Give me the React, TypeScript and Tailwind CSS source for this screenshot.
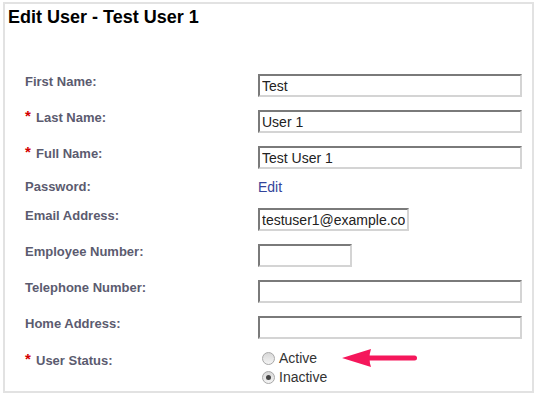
import React from 'react';

const LABEL = 'text-[13px] leading-[16px] font-bold text-[#5b5b6f]';
const INPUT =
  'h-[23px] border-2 border-t-[#7a7a7a] border-l-[#7a7a7a] border-b-[#d4d4d4] border-r-[#d4d4d4] bg-white px-[2px] text-[14px] text-[#222] outline-none';

function Label({ text, required }: { text: string; required?: boolean }) {
  return (
    <div className={`${LABEL} w-[233px] shrink-0 flex`}>
      {required ? (
        <span className="text-[#d40000] text-[15px] leading-[12px] w-[11px]">*</span>
      ) : null}
      <span>{text}</span>
    </div>
  );
}

function Radio({ checked }: { checked?: boolean }) {
  return (
    <span className="w-[13px] h-[13px] rounded-full border border-[#a8a8a8] bg-gradient-to-b from-[#d8d8d8] to-[#f4f4f4] flex items-center justify-center shrink-0">
      {checked ? <span className="w-[5px] h-[5px] rounded-full bg-[#444]" /> : null}
    </span>
  );
}

export default function App() {
  return (
    <div className="w-[538px] h-[397px] bg-white pt-[2px] pl-[3px]" style={{ fontFamily: '"Liberation Sans", Arial, sans-serif' }}>
      <div className="w-[531px] h-[391px] border-2 border-[#e2e2e2]">
        <h1 className="mt-[2px] ml-[3px] text-[18px] leading-[22px] font-bold text-black">Edit User - Test User 1</h1>

        <div className="mt-[46px] pl-[20px] flex flex-col">
          <div className="flex h-[36px]">
            <Label text="First Name:" />
            <input className={`${INPUT} w-[264px]`} defaultValue="Test" />
          </div>
          <div className="flex h-[36px]">
            <Label text="Last Name:" required />
            <input className={`${INPUT} w-[264px]`} defaultValue="User 1" />
          </div>
          <div className="flex h-[33px]">
            <Label text="Full Name:" required />
            <input className={`${INPUT} w-[264px]`} defaultValue="Test User 1" />
          </div>
          <div className="flex h-[29px]">
            <Label text="Password:" />
            <a className="text-[14px] leading-[16px] text-[#33449a]">Edit</a>
          </div>
          <div className="flex h-[36px]">
            <Label text="Email Address:" />
            <input className={`${INPUT} w-[151px]`} defaultValue="testuser1@example.com" />
          </div>
          <div className="flex h-[36px]">
            <Label text="Employee Number:" />
            <input className={`${INPUT} w-[94px]`} />
          </div>
          <div className="flex h-[36px]">
            <Label text="Telephone Number:" />
            <input className={`${INPUT} w-[264px]`} />
          </div>
          <div className="flex h-[37px]">
            <Label text="Home Address:" />
            <input className={`${INPUT} w-[264px]`} />
          </div>
          <div className="flex">
            <Label text="User Status:" required />
            <div className="-mt-[5px] flex flex-col text-[14px] leading-[19px] text-[#333]">
              <div className="flex items-center gap-[4px] pl-[4px]">
                <Radio />
                <span>Active</span>
                <svg width="78" height="20" viewBox="0 0 78 20" className="ml-[20px]">
                  <path d="M1 10 L30 1 Q27 10 30 19 Z" fill="#f5175b" />
                  <path d="M26 7.5 H73.5 A2.5 2.5 0 0 1 73.5 12.5 H26 Z" fill="#f5175b" />
                </svg>
              </div>
              <div className="flex items-center gap-[4px] pl-[4px]">
                <Radio checked />
                <span>Inactive</span>
              </div>
            </div>
          </div>
        </div>
      </div>
    </div>
  );
}
